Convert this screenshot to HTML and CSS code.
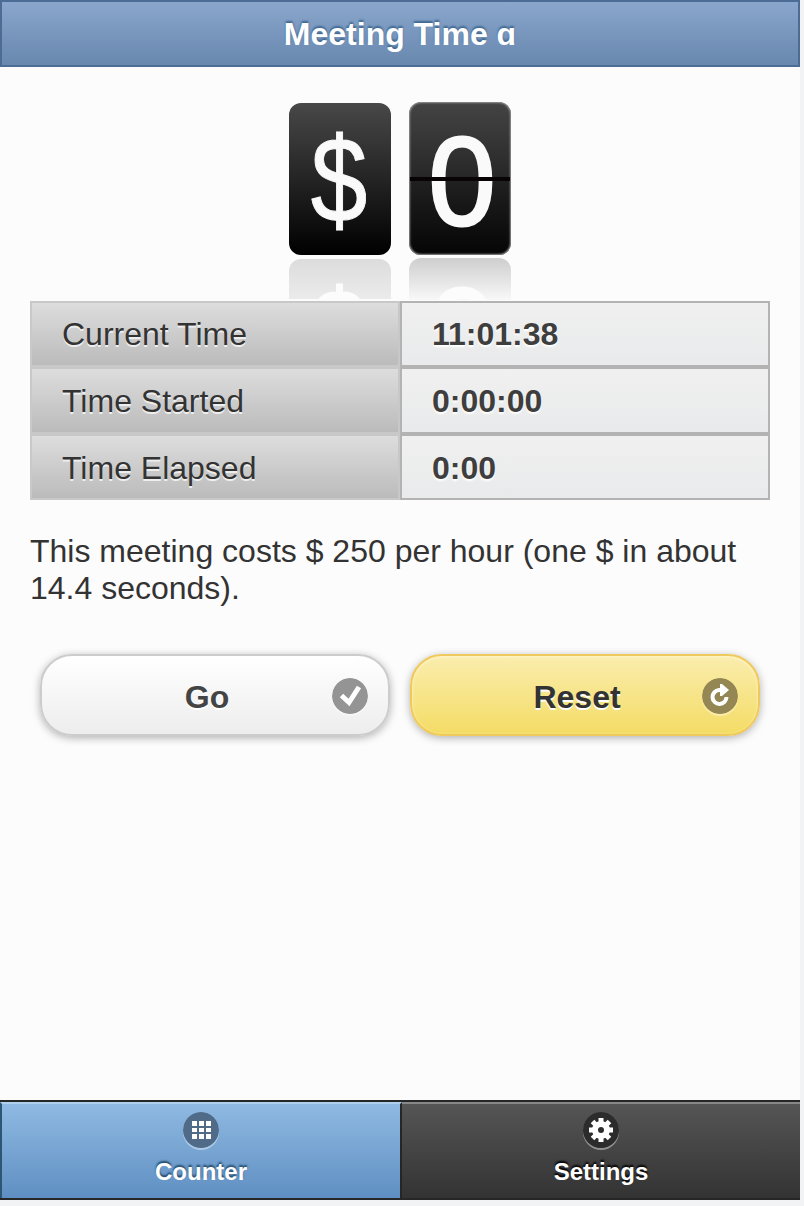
FILE: index.html
```html
<!DOCTYPE html>
<html lang="en">
<head>
<meta charset="utf-8">
<title>Meeting Time</title>
<link rel="stylesheet" href="styles.css">
</head>
<body>
<div class="page">
  <header class="header"><h1>Meeting Time ɑ</h1></header>
  <main class="content">
    <div class="counter">
      <div class="flip">
        <div class="card currency"><span>$</span></div>
        <div class="mirror currency-mirror" aria-hidden="true"><span>$</span></div>
      </div>
      <div class="flip">
        <div class="card digit"><span>0</span><i class="hinge"></i></div>
        <div class="mirror digit-mirror" aria-hidden="true"><span>0</span></div>
      </div>
    </div>
    <div class="times">
      <div class="label">Current Time</div><div class="value">11:01:38</div>
      <div class="label">Time Started</div><div class="value">0:00:00</div>
      <div class="label">Time Elapsed</div><div class="value">0:00</div>
    </div>
    <p class="cost">This meeting costs $ 250 per hour (one $ in about 14.4 seconds).</p>
    <div class="actions">
      <button class="btn go"><span>Go</span>
        <svg class="icon" viewBox="0 0 36 36"><circle cx="18" cy="18" r="18"/><path d="M9.500 17.500 L17 24.500 L27 9" fill="none" stroke="#fff" stroke-width="5"/></svg>
      </button>
      <button class="btn reset"><span>Reset</span>
        <svg class="icon" viewBox="0 0 36 36"><circle cx="18" cy="18" r="18"/><path d="M20 12 H17 A7 7 0 1 0 24.500 19" fill="none" stroke="#fff" stroke-width="4"/><path d="M18 6 L20 6 L27 12 L20 18 L18 18 Z" fill="#fff"/></svg>
      </button>
    </div>
  </main>
  <nav class="tabs">
    <a class="tab active">
      <svg class="icon" viewBox="0 0 36 36"><circle cx="18" cy="18" r="18"/><path fill="#fff" d="M9 9h5v5H9zM16 9h5v5h-5zM23 9h5v5h-5zM9 16h5v4H9zM16 16h5v4h-5zM23 16h5v4h-5zM9 22h5v5H9zM16 22h5v5h-5zM23 22h5v5h-5z"/></svg>
      <span>Counter</span>
    </a>
    <a class="tab">
      <svg class="icon" viewBox="0 0 36 36"><circle cx="18" cy="18" r="18"/><circle cx="18" cy="18" r="6" fill="none" stroke="#fff" stroke-width="6"/><path d="M18 6v5M18 25v5M6 18h5M25 18h5M9.5 9.5l3.5 3.5M23 23l3.5 3.5M26.500 9.500l-3.500 3.500M13 23l-3.500 3.500" stroke="#fff" stroke-width="5"/></svg>
      <span>Settings</span>
    </a>
  </nav>
</div>
</body>
</html>
```
FILE: styles.css
```css
* { box-sizing: border-box; }
body {
  margin: 0;
  height: 1206px;
  background: #f2f3f4;
  color: #333;
  font: 32px/38px "Liberation Sans", Arial, sans-serif;
  overflow: hidden;
}
.page {
  width: 800px;
  height: 1200px;
  display: flex;
  flex-direction: column;
  background: #fcfcfc;
}
.header {
  height: 67px;
  border: 2px solid #4c6c95;
  background: linear-gradient(#8aa6cd, #6888ae);
  text-align: center;
}
.header h1 {
  margin: 0;
  padding-top: 12px;
  font-size: 32px;
  line-height: 40px;
  color: #fff;
  text-shadow: 0 -2px 2px #3e6790;
}
.content { flex: 1; padding: 34px 30px 0; }
.counter {
  height: 200px;
  display: flex;
  justify-content: center;
  gap: 18px;
}
.flip { width: 102px; overflow: hidden; }
.card {
  position: relative;
  height: 152px;
  margin-top: 2px;
  border-radius: 12px;
  color: #fafafa;
  text-align: center;
  overflow: hidden;
}
.card span, .mirror span { display: block; }
.currency { background: linear-gradient(#484848, #242424 50%, #000); }
.currency span, .currency-mirror span {
  font-size: 121px;
  line-height: 152px;
  -webkit-text-stroke: 1px currentColor;
  transform: translate(-1px, 0) scaleX(.84);
}
.digit {
  margin-top: 1px;
  height: 153px;
  background: linear-gradient(#444, #282828 48%, #202020 52%, #050505);
  box-shadow: inset 0 0 2px 1px #999;
}
.digit span, .digit-mirror span {
  font-size: 127px;
  line-height: 153px;
  -webkit-text-stroke: 3px currentColor;
  transform: translate(2px, 3px) scaleX(.95);
}
.hinge {
  position: absolute;
  left: 1px;
  right: 1px;
  top: 75px;
  height: 4px;
  background: #080405;
}
.mirror {
  height: 40px;
  margin-top: 4px;
  border-radius: 12px 12px 0 0;
  color: #fcfcfc;
  text-align: center;
  overflow: hidden;
  background: linear-gradient(#dcdcdc, #ebebeb);
}
.currency-mirror span { transform: translate(-1px, -4px) scaleX(.84); }
.digit-mirror {
  height: 42px;
  margin-top: 3px;
  background: linear-gradient(#cecece, #f8f8f8);
}
.digit-mirror span { transform: translate(2px, -2px) scaleX(.95); }
.times {
  display: grid;
  grid-template-columns: 370px 370px;
  grid-template-rows: 66px 67px 66px;
}
.label, .value { padding: 12px 30px 0; border: 2px solid #c8c8c8; }
.label:nth-child(n+3), .value:nth-child(n+3) { padding-top: 13px; }
.label {
  background: linear-gradient(#ddd, #bbb);
  text-shadow: 0 2px 0 #eee;
}
.value {
  border-color: #b3b3b3;
  background: linear-gradient(#f0f0f0, #e9eaeb);
  color: #3e3e3e;
  font-weight: bold;
  text-shadow: 0 2px 2px #fff;
}
.cost { margin: 33px 0 0; line-height: 37px; }
.actions {
  display: grid;
  grid-template-columns: 350px 350px;
  gap: 20px;
  padding: 47px 10px 0;
}
.btn {
  position: relative;
  height: 82px;
  padding: 4px 16px 0 0;
  border: 2px solid #ccc;
  border-radius: 32px;
  background: linear-gradient(#fff, #ededed);
  box-shadow: 0 2px 8px rgba(0, 0, 0, .3);
  color: #444;
  font: bold 32px/40px "Liberation Sans", Arial, sans-serif;
  text-shadow: 0 2px 0 #fff;
}
.reset {
  border-color: #f0c95c;
  background: linear-gradient(#faedad, #f4dc65);
  box-shadow: 0 2px 8px rgba(0, 0, 0, .3), inset 0 1px 3px #fff6cf;
  color: #333;
}
.icon { width: 36px; height: 36px; border-radius: 50%; fill: #949494; }
.btn .icon { position: absolute; right: 20px; top: 22px; box-shadow: 0 2px 0 rgba(255, 255, 255, .4); }
.reset .icon { fill: #958754; }
.tabs {
  height: 100px;
  display: grid;
  grid-template-columns: 402px 398px;
  border-top: 2px solid #262626;
  border-bottom: 2px solid #262626;
}
.tab {
  display: flex;
  flex-direction: column;
  align-items: center;
  padding-top: 8px;
  border-top: 2px solid #888;
  background: linear-gradient(#555, #333);
  color: #fff;
  font-weight: bold;
  font-size: 24px;
  line-height: 40px;
  text-shadow: 0 -2px 2px #000;
}
.tab span { margin-top: 4px; }
.tab .icon { fill: #2c2c2c; box-shadow: 0 2px 0 rgba(255, 255, 255, .4); }
.tab.active {
  border-top-color: #aed0ee;
  border-left: 2px solid #2d5674;
  border-right: 2px solid #262626;
  background: linear-gradient(#8fb9e2, #5f8fc2) padding-box;
  text-shadow: 0 -2px 2px #1f4868;
}
.tab.active .icon { fill: #506b87; }
```
